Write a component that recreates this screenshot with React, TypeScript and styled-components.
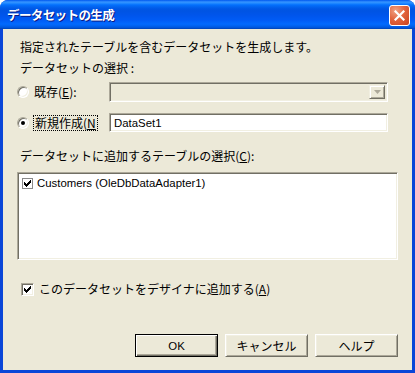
import React from "react";
import styled, { createGlobalStyle } from "styled-components";

const Global = createGlobalStyle`
  html, body { margin: 0; padding: 0; background: #ffffff; }
  body { width: 415px; height: 373px; overflow: hidden; }
`;

const Window = styled.div`
  width: 415px;
  height: 373px;
  box-sizing: border-box;
  display: flex;
  flex-direction: column;
  background: #0a46d8;
  border-radius: 8px 8px 0 0;
  overflow: hidden;
  font-family: "Noto Sans CJK JP", sans-serif;
  font-size: 12px;
  line-height: 14px;
  color: #000;
`;

const TitleBar = styled.div`
  height: 29px;
  flex: none;
  display: flex;
  align-items: center;
  padding: 0 5px 0 7px;
  box-sizing: border-box;
  background: linear-gradient(
    180deg,
    #0058ee 0px,
    #3593ff 2px,
    #288eff 3px,
    #127dff 4px,
    #036ffc 5px,
    #0262ee 7px,
    #0057e5 9px,
    #0054e3 11px,
    #0055eb 15px,
    #005bf5 20px,
    #026afe 24px,
    #0062ef 26px,
    #0052d6 28px,
    #0040ab 29px
  );
`;

const TitleText = styled.div`
  flex: 1;
  color: #fff;
  font-weight: bold;
  font-size: 12.5px;
  letter-spacing: -0.6px;
  text-shadow: 1px 1px 0 #0a1883;
  padding-top: 1px;
`;

const CloseButton = styled.div`
  width: 21px;
  height: 21px;
  box-sizing: border-box;
  border: 1px solid #ffffff;
  border-radius: 3px;
  background: radial-gradient(circle at 30% 25%, #f0a284 0%, #e2653f 45%, #c8421e 100%);
  display: flex;
  align-items: center;
  justify-content: center;
  margin-top: 1px;
`;

const Client = styled.div`
  flex: 1;
  margin: 0 3px 3px 3px;
  background: #ece9d8;
  display: flex;
  flex-direction: column;
  padding: 11px 14px 13px 14px;
`;

const Label = styled.div<{ $gap: number }>`
  margin-top: ${(p) => p.$gap}px;
  padding-left: 3px;
  height: 14px;
  white-space: nowrap;
`;

const Latin = styled.span`
  font-family: "Liberation Sans", Arial, sans-serif;
  font-size: 11.4px;
`;

const U = styled.span`
  text-decoration: underline;
  text-underline-offset: 1px;
`;

const RadioRow = styled.div<{ $gap: number; $h: number }>`
  margin-top: ${(p) => p.$gap}px;
  height: ${(p) => p.$h}px;
  display: flex;
  align-items: center;
`;

const RadioLabel = styled.div`
  width: 92px;
  flex: none;
  display: flex;
  align-items: center;
  gap: 5px;
`;

const Radio = styled.div<{ $checked?: boolean }>`
  width: 12px;
  height: 12px;
  box-sizing: border-box;
  border-radius: 50%;
  background: #fff;
  border: 1px solid;
  border-color: #aca899 #ffffff #ffffff #aca899;
  box-shadow: inset 1px 1px 0 #716f64, inset -1px -1px 0 #f1efe2;
  display: flex;
  align-items: center;
  justify-content: center;
  &::after {
    content: "";
    display: ${(p) => (p.$checked ? "block" : "none")};
    width: 4px;
    height: 4px;
    border-radius: 50%;
    background: #000;
  }
`;

const FocusText = styled.span`
  outline: 1px dotted #000;
  outline-offset: 0px;
  padding: 0 1px;
`;

const Field = styled.div<{ $disabled?: boolean; $h: number }>`
  flex: 1;
  margin-right: 10px;
  height: ${(p) => p.$h}px;
  box-sizing: border-box;
  border: 1px solid;
  border-color: #aca899 #ffffff #ffffff #aca899;
  box-shadow: inset 1px 1px 0 #716f64, inset -1px -1px 0 #f1efe2;
  background: ${(p) => (p.$disabled ? "#ece9d8" : "#ffffff")};
  display: flex;
  align-items: center;
  padding: 2px 2px 2px 4px;
  white-space: nowrap;
`;

const DropButton = styled.div`
  margin-left: auto;
  width: 16px;
  height: 100%;
  box-sizing: border-box;
  background: #ece9d8;
  border: 1px solid;
  border-color: #f1efe2 #716f64 #716f64 #f1efe2;
  box-shadow: inset 1px 1px 0 #ffffff, inset -1px -1px 0 #aca899;
  display: flex;
  align-items: center;
  justify-content: center;
`;

const ListBox = styled.div`
  margin-top: 9px;
  height: 88px;
  box-sizing: border-box;
  border: 1px solid;
  border-color: #aca899 #ffffff #ffffff #aca899;
  box-shadow: inset 1px 1px 0 #716f64, inset -1px -1px 0 #f1efe2;
  background: #fff;
  padding: 2px 2px 2px 4px;
`;

const ListItem = styled.div`
  display: flex;
  align-items: center;
  gap: 4px;
  height: 16px;
  white-space: nowrap;
`;

const Check = styled.div<{ $flat?: boolean }>`
  width: ${(p) => (p.$flat ? 11 : 13)}px;
  height: ${(p) => (p.$flat ? 11 : 13)}px;
  flex: none;
  box-sizing: border-box;
  background: #fff;
  border: 1px solid;
  border-color: ${(p) => (p.$flat ? "#8a8a8a" : "#aca899 #ffffff #ffffff #aca899")};
  box-shadow: ${(p) => (p.$flat ? "none" : "inset 1px 1px 0 #716f64, inset -1px -1px 0 #f1efe2")};
  display: flex;
  align-items: center;
  justify-content: center;
`;

const CheckRow = styled.div`
  margin-top: 22px;
  padding-left: 4px;
  display: flex;
  align-items: center;
  gap: 5px;
  height: 14px;
  white-space: nowrap;
`;

const ButtonRow = styled.div`
  margin-top: auto;
  display: flex;
  justify-content: flex-end;
  gap: 7px;
`;

const Button = styled.div<{ $default?: boolean }>`
  width: 83px;
  height: 23px;
  box-sizing: border-box;
  display: flex;
  align-items: center;
  justify-content: center;
  background: #ece9d8;
  border: 1px solid;
  border-color: ${(p) => (p.$default ? "#000000" : "#ffffff #716f64 #716f64 #ffffff")};
  box-shadow: ${(p) =>
    p.$default
      ? "inset 1px 1px 0 #ffffff, inset -1px -1px 0 #716f64, inset -2px -2px 0 #aca899"
      : "inset 1px 1px 0 #f1efe2, inset -1px -1px 0 #aca899"};
`;

const CheckMark: React.FC<{ size: number }> = ({ size }) => (
  <svg width={size} height={size} viewBox="0 0 9 9">
    <path d="M1.5 3.5 L3.5 5.5 L7.5 1.5 M1.5 4.5 L3.5 6.5 L7.5 2.5 M1.5 5.5 L3.5 7.5 L7.5 3.5" stroke="#000" strokeWidth="1" fill="none" shapeRendering="crispEdges" />
  </svg>
);

export default function App() {
  return (
    <>
      <Global />
      <Window>
        <TitleBar>
          <TitleText>データセットの生成</TitleText>
          <CloseButton>
            <svg width="11" height="11" viewBox="0 0 11 11">
              <path d="M1.5 1.5 L9.5 9.5 M9.5 1.5 L1.5 9.5" stroke="#fff" strokeWidth="2.2" strokeLinecap="square" />
            </svg>
          </CloseButton>
        </TitleBar>
        <Client>
          <Label $gap={0}>指定されたテーブルを含むデータセットを生成します。</Label>
          <Label $gap={7}>データセットの選択 :</Label>
          <RadioRow $gap={7} $h={20}>
            <RadioLabel>
              <Radio />
              <span>
                既存(<U>E</U>):
              </span>
            </RadioLabel>
            <Field $disabled $h={20}>
              <DropButton>
                <svg width="7" height="4" viewBox="0 0 7 4">
                  <path d="M0 0 H7 L3.5 4 Z" fill="#aca899" />
                </svg>
              </DropButton>
            </Field>
          </RadioRow>
          <RadioRow $gap={11} $h={19}>
            <RadioLabel>
              <Radio $checked />
              <FocusText>
                新規作成(<U>N</U>
              </FocusText>
            </RadioLabel>
            <Field $h={19}>
              <Latin>DataSet1</Latin>
            </Field>
          </RadioRow>
          <Label $gap={17}>
            データセットに追加するテーブルの選択(<U>C</U>):
          </Label>
          <ListBox>
            <ListItem>
              <Check $flat>
                <CheckMark size={9} />
              </Check>
              <Latin>Customers (OleDbDataAdapter1)</Latin>
            </ListItem>
          </ListBox>
          <CheckRow>
            <Check>
              <CheckMark size={9} />
            </Check>
            <span>
              このデータセットをデザイナに追加する(<U>A</U>)
            </span>
          </CheckRow>
          <ButtonRow>
            <Button $default>
              <Latin>OK</Latin>
            </Button>
            <Button>キャンセル</Button>
            <Button>ヘルプ</Button>
          </ButtonRow>
        </Client>
      </Window>
    </>
  );
}
